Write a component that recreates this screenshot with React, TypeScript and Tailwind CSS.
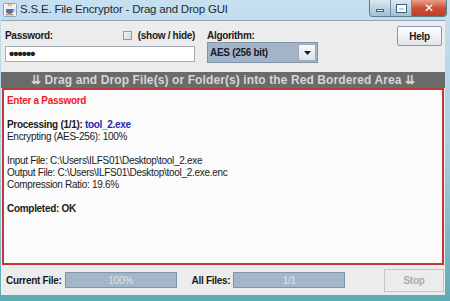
import React from "react";

// Java coffee-cup window icon
function JavaIcon() {
  return (
    <svg width="14" height="14" viewBox="0 0 14 14">
      <rect x="0.5" y="0.5" width="13" height="13" rx="1" fill="#eef3f7" stroke="#8ea4b4" />
      <path d="M5 3c1-1 0-1.5 1-2.5M7.5 3.5c1-1 0-1.5 1-2.5" stroke="#e07020" strokeWidth="1" fill="none" />
      <path d="M3 6h7v2.5c0 1.5-1.5 2.5-3.5 2.5S3 10 3 8.5z" fill="#4a72b0" />
      <path d="M10 6.5h1.2c.8 0 .8 2-.8 2H10" stroke="#4a72b0" strokeWidth="0.8" fill="none" />
      <rect x="2.5" y="11.3" width="8" height="1" fill="#e07020" />
    </svg>
  );
}

function WindowButtons() {
  return (
    <div className="flex h-[17px] self-start mr-[3px] rounded-b-[4px] overflow-hidden border border-t-0 border-[#5a7a8c]">
      <div className="w-[21px] h-full flex items-center justify-center bg-gradient-to-b from-[#d9e9f2] to-[#9fc0d3] border-r border-[#6d8fa2]">
        <div className="w-[8px] h-[3px] bg-white border border-[#40607a] mt-[5px]" />
      </div>
      <div className="w-[21px] h-full flex items-center justify-center bg-gradient-to-b from-[#d9e9f2] to-[#9fc0d3] border-r border-[#6d8fa2]">
        <div className="w-[9px] h-[7px] border-2 border-t-[3px] border-white outline outline-1 outline-[#40607a]" />
      </div>
      <div className="w-[34px] h-full flex items-center justify-center bg-gradient-to-b from-[#e8a08c] via-[#c9503a] to-[#c43c2a] text-white font-bold text-[12px] leading-none font-['DejaVu_Sans',sans-serif]">
        ✕
      </div>
    </div>
  );
}

export default function App() {
  return (
    <div className="w-[450px] h-[301px] flex flex-col overflow-hidden bg-gradient-to-b from-[#c6e0ef] via-[#a6cfe0] to-[#5ea9b4] font-['Liberation_Sans',Arial,sans-serif] text-[#1a1a1a]">
      {/* title bar */}
      <div className="h-[20px] flex items-center shrink-0">
        <div className="ml-[3px]">
          <JavaIcon />
        </div>
        <span className="ml-[3px] text-[11.5px] text-[#1c2a36] tracking-[-0.2px]">
          S.S.E. File Encryptor - Drag and Drop GUI
        </span>
        <div className="ml-auto h-full flex">
          <WindowButtons />
        </div>
      </div>

      {/* content pane */}
      <div className="flex-1 ml-[1px] mr-[5px] mb-[6px] bg-[#ececec] border-t border-[#8fa6b4] flex flex-col text-[10px] tracking-[-0.3px]">
        {/* top controls */}
        <div className="h-[51px] flex shrink-0">
          <div className="ml-[4px] w-[190px] flex flex-col">
            <div className="mt-[7px] h-[14px] flex items-center justify-between font-bold">
              <span>Password:</span>
              <span className="flex items-center gap-[6px]">
                <span className="w-[9px] h-[9px] border border-[#8a9cac] bg-gradient-to-br from-[#f4f6f8] to-[#d0d8e0]" />
                <span>(show / hide)</span>
              </span>
            </div>
            <div className="mt-[4px] h-[16px] bg-white border border-[#a3adb8] flex items-center pl-[3px] text-[15px] font-bold tracking-[-1px] text-[#222]">
              ••••••
            </div>
          </div>

          <div className="ml-[12px] w-[111px] flex flex-col">
            <div className="mt-[7px] h-[14px] flex items-center font-bold">Algorithm:</div>
            <div className="h-[21px] bg-[#a4b5c9] border border-[#8093a8] flex items-center">
              <span className="pl-[2px] font-bold text-[#16202c]">AES (256 bit)</span>
              <div className="ml-auto mr-[1px] w-[18px] h-[17px] bg-gradient-to-b from-[#f8f9fa] to-[#dde3e9] border border-[#9aaabb] flex items-center justify-center">
                <svg width="7" height="4" viewBox="0 0 7 4">
                  <path d="M0 0h7L3.5 4z" fill="#1a1a1a" />
                </svg>
              </div>
            </div>
          </div>

          <div className="ml-auto mr-[3px] mt-[5px] w-[45px] h-[20px] rounded-[2px] border border-[#8499ae] bg-gradient-to-b from-[#ffffff] to-[#dfe5eb] flex items-center justify-center font-bold">
            Help
          </div>
        </div>

        {/* banner */}
        <div className="h-[16px] shrink-0 bg-[#6b6b6b] flex items-center justify-center text-[#d6d6d6] font-bold text-[12px] tracking-[0.1px]">
          ⇊ Drag and Drop File(s) or Folder(s) into the Red Bordered Area ⇊
        </div>

        {/* drop area */}
        <div className="h-[177px] shrink-0 mx-[1px] border-2 border-[#c03838] bg-[#fbfbfb] pl-[3px] pt-[5px] leading-[12px]">
          <div className="font-bold text-[#ee1c24]">Enter a Password</div>
          <div>&nbsp;</div>
          <div className="font-bold">
            Processing (1/1): <span className="text-[#2626b4]">tool_2.exe</span>
          </div>
          <div>Encrypting (AES-256): 100%</div>
          <div>&nbsp;</div>
          <div>Input File: C:\Users\ILFS01\Desktop\tool_2.exe</div>
          <div>Output File: C:\Users\ILFS01\Desktop\tool_2.exe.enc</div>
          <div>Compression Ratio: 19.6%</div>
          <div>&nbsp;</div>
          <div className="font-bold">Completed: OK</div>
        </div>

        {/* status row */}
        <div className="flex-1 flex items-center pl-[5px] font-bold">
          <span>Current File:</span>
          <div className="ml-[3px] w-[112px] h-[16px] bg-[#a6b6c9] border border-[#8195b0] flex items-center justify-center font-normal text-[#dde3ea]">
            100%
          </div>
          <span className="ml-[15px]">All Files:</span>
          <div className="ml-[3px] w-[112px] h-[16px] bg-[#a6b6c9] border border-[#8195b0] flex items-center justify-center font-normal text-[#dde3ea]">
            1/1
          </div>
          <div className="ml-auto mr-[1px] w-[60px] h-[23px] border border-[#c4c4c4] flex items-center justify-center text-[#ababab]">
            Stop
          </div>
        </div>
      </div>
    </div>
  );
}
